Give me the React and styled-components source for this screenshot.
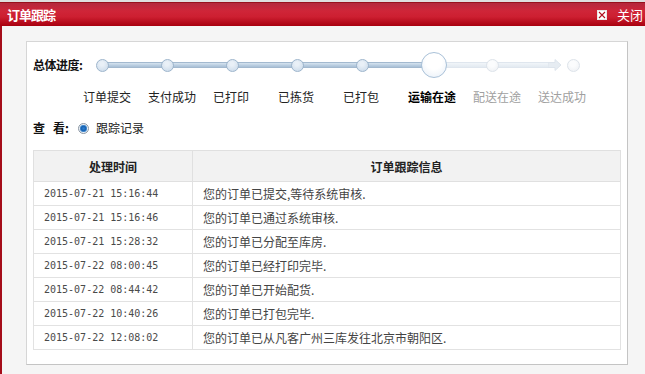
import React from "react";
import styled, { createGlobalStyle } from "styled-components";

const GlobalStyle = createGlobalStyle`
  html, body { margin: 0; padding: 0; background: #f5f5f5; overflow: hidden; }
  body { font-family: "Liberation Sans", "Noto Sans CJK SC", sans-serif; }
`;

const CN = `"Noto Sans CJK SC", "Liberation Sans", sans-serif`;

const Dialog = styled.div`
  width: 645px;
  height: 374px;
  display: flex;
  flex-direction: column;
  background: #f5f5f5;
  border-top: 2px solid #dedede;
  box-sizing: border-box;
`;

const Header = styled.div`
  height: 24px;
  flex: none;
  display: flex;
  align-items: center;
  justify-content: space-between;
  box-sizing: border-box;
  border-top: 1px solid #98101c;
  background: linear-gradient(#b3283c 0%, #cf2538 35%, #cd1f31 60%, #a8000f 100%);
  padding: 0 2px 0 7px;
`;

const Title = styled.div`
  font-family: ${CN};
  font-size: 13px;
  font-weight: 700;
  letter-spacing: -1px;
  color: #fff;
  line-height: 16px;
`;

const Close = styled.div`
  display: flex;
  align-items: center;
  gap: 10px;
  font-family: ${CN};
  font-size: 13px;
  color: #fff;
  line-height: 16px;
`;

const Body = styled.div`
  flex: 1;
  border-left: 2px solid #a50d1a;
  padding: 15px 0 0 24px;
  box-sizing: border-box;
`;

const Panel = styled.div`
  width: 602px;
  height: 324px;
  box-sizing: border-box;
  background: #fff;
  border: 1px solid #d6d6d6;
  border-right-color: #c4c4c4;
  border-bottom-color: #c4c4c4;
  padding: 10px 6px 0 6px;
`;

const ProgressRow = styled.div`
  display: flex;
  align-items: center;
  height: 26px;
`;

const StrongLabel = styled.div`
  font-family: ${CN};
  font-size: 12px;
  font-weight: 700;
  color: #111;
  width: 63px;
  flex: none;
  line-height: 16px;
  letter-spacing: -0.5px;
`;

const Track = styled.div`
  position: relative;
  width: 490px;
  height: 26px;
`;

const Bar = styled.div`
  position: absolute;
  top: 10px;
  height: 6px;
  box-sizing: border-box;
  border-radius: 2px;
  ${(p) =>
    p.$done
      ? `background: linear-gradient(#d6e3ef, #b9cde0 60%, #a9c0d6); border: 1px solid #a3b9cf;`
      : `background: linear-gradient(#f1f5f9, #e3eaf1); border: 1px solid #dfe6ee;`}
`;

const Node = styled.div`
  position: absolute;
  box-sizing: border-box;
  border-radius: 50%;
  ${(p) =>
    p.$big
      ? `width: 26px; height: 26px; top: 0; background: radial-gradient(circle at 50% 35%, #ffffff 40%, #e6eef7 100%); border: 1px solid #a9c1d8;`
      : p.$done
      ? `width: 13px; height: 13px; top: 7px; background: radial-gradient(circle at 45% 35%, #e9f0f7 20%, #c6d7e8 100%); border: 1px solid #9db5cc;`
      : `width: 13px; height: 13px; top: 7px; background: radial-gradient(circle at 45% 35%, #fbfcfd 30%, #eceff3 100%); border: 1px solid #dde3ea;`}
`;

const Arrow = styled.svg`
  position: absolute;
  top: 7px;
  left: 452px;
`;

const LabelRow = styled.div`
  display: flex;
  margin: 11px 0 0 50px;
  height: 16px;
  align-items: center;
`;

const StepLabel = styled.div`
  width: 65px;
  flex: none;
  font-family: ${CN};
  font-size: 12px;
  line-height: 16px;
  white-space: nowrap;
  color: ${(p) => (p.$state === "future" ? "#a0a0a0" : "#222")};
  font-weight: ${(p) => (p.$state === "active" ? 700 : 400)};
  ${(p) => (p.$state === "active" ? "color: #000;" : "")}
`;

const ViewRow = styled.div`
  display: flex;
  align-items: center;
  margin-top: 15px;
  height: 16px;
`;

const ViewLabel = styled.div`
  display: flex;
  gap: 8px;
  font-family: ${CN};
  font-size: 12px;
  font-weight: 700;
  color: #111;
  line-height: 16px;
  white-space: pre;
  margin-right: 9px;
`;

const Radio = styled.span`
  width: 11px;
  height: 11px;
  box-sizing: border-box;
  border-radius: 50%;
  border: 1px solid #8a96a3;
  background: radial-gradient(circle at 50% 50%, #2f7fd0 0, #1560b0 2.5px, #6aa6de 3.5px, #e8eef4 4px);
  margin-right: 7px;
  flex: none;
`;

const RadioText = styled.span`
  font-family: ${CN};
  font-size: 12px;
  color: #222;
  line-height: 16px;
`;

const Table = styled.table`
  margin-top: 14px;
  width: 588px;
  border-collapse: collapse;
  table-layout: fixed;
`;

const Th = styled.th`
  height: 31px;
  padding: 0;
  box-sizing: border-box;
  background: #f2f2f2;
  border: 1px solid #e0e0e0;
  font-family: ${CN};
  font-size: 12px;
  font-weight: 700;
  color: #222;
  text-align: center;
  width: ${(p) => p.$w || "auto"};
`;

const Td = styled.td`
  height: 24px;
  padding: 0 0 0 10px;
  box-sizing: border-box;
  border: 1px solid #e2e2e2;
  font-size: ${(p) => (p.$mono ? "10px" : "12px")};
  font-family: ${(p) => (p.$mono ? `"DejaVu Sans Mono", "Liberation Mono", monospace` : CN)};
  color: ${(p) => (p.$mono ? "#4a4a4a" : "#444")};
  white-space: nowrap;
  line-height: 16px;
`;

const steps = [
  { label: "订单提交", state: "done" },
  { label: "支付成功", state: "done" },
  { label: "已打印", state: "done" },
  { label: "已拣货", state: "done" },
  { label: "已打包", state: "done" },
  { label: "运输在途", state: "active" },
  { label: "配送在途", state: "future" },
  { label: "送达成功", state: "future" },
];

const records = [
  ["2015-07-21 15:16:44", "您的订单已提交,等待系统审核."],
  ["2015-07-21 15:16:46", "您的订单已通过系统审核."],
  ["2015-07-21 15:28:32", "您的订单已分配至库房."],
  ["2015-07-22 08:00:45", "您的订单已经打印完毕."],
  ["2015-07-22 08:44:42", "您的订单已开始配货."],
  ["2015-07-22 10:40:26", "您的订单已打包完毕."],
  ["2015-07-22 12:08:02", "您的订单已从凡客广州三库发往北京市朝阳区."],
];

export default function App() {
  return (
    <>
      <GlobalStyle />
      <Dialog>
        <Header>
          <Title>订单跟踪</Title>
          <Close>
            <svg width="10" height="10" viewBox="0 0 10 10">
              <rect x="0.5" y="0.5" width="9" height="9" fill="#fff" stroke="#e8e8e8" />
              <path d="M2 2 L8 8 M8 2 L2 8" stroke="#b01020" strokeWidth="1.1" />
            </svg>
            <span>关闭</span>
          </Close>
        </Header>
        <Body>
          <Panel>
            <ProgressRow>
              <StrongLabel>总体进度:</StrongLabel>
              <Track>
                <Bar $done style={{ left: 6, width: 322 }} />
                <Bar style={{ left: 348, width: 110 }} />
                <Arrow width="14" height="12" viewBox="0 0 14 12">
                  <path d="M0 3.5 H7 V0.5 L13 6 L7 11.5 V8.5 H0 Z" fill="#e6ecf2" stroke="#dde4ec" strokeWidth="1" />
                </Arrow>
                {[0, 1, 2, 3, 4].map((i) => (
                  <Node key={i} $done style={{ left: i * 65 }} />
                ))}
                <Node $big style={{ left: 325 }} />
                <Node style={{ left: 390 }} />
                <Node style={{ left: 471 }} />
              </Track>
            </ProgressRow>
            <LabelRow>
              {steps.map((s) => (
                <StepLabel key={s.label} $state={s.state}>
                  {s.label}
                </StepLabel>
              ))}
            </LabelRow>
            <ViewRow>
              <ViewLabel>
                <span>查</span>
                <span>看:</span>
              </ViewLabel>
              <Radio />
              <RadioText>跟踪记录</RadioText>
            </ViewRow>
            <Table>
              <thead>
                <tr>
                  <Th $w="159px">处理时间</Th>
                  <Th>订单跟踪信息</Th>
                </tr>
              </thead>
              <tbody>
                {records.map(([t, m]) => (
                  <tr key={t}>
                    <Td $mono>{t}</Td>
                    <Td>{m}</Td>
                  </tr>
                ))}
              </tbody>
            </Table>
          </Panel>
        </Body>
      </Dialog>
    </>
  );
}
